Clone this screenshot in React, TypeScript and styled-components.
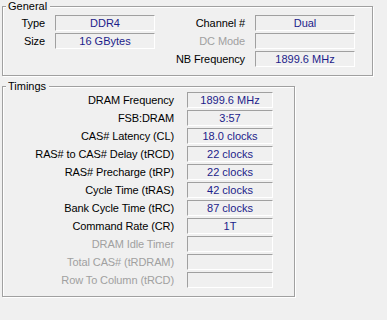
import { Fragment } from 'react';
import styled, { createGlobalStyle } from 'styled-components';

const GlobalStyle = createGlobalStyle`
  html, body {
    margin: 0;
    padding: 0;
    background: #f0f0f0;
  }
  body {
    font-family: 'Liberation Sans', Arial, sans-serif;
    font-size: 11px;
    color: #000;
  }
`;

const Page = styled.div`
  width: 387px;
  height: 320px;
  box-sizing: border-box;
  padding: 6px 0 0 2px;
  display: flex;
  flex-direction: column;
  align-items: flex-start;
  gap: 10px;
`;

interface IGroup {
  width: number;
}

const Group = styled.div<IGroup>`
  position: relative;
  box-sizing: border-box;
  width: ${(props) => props.width}px;
  border: 1px solid #a0a0a0;
  box-shadow: 1px 1px 0 #fff, inset 1px 1px 0 #fff;
`;

const Legend = styled.span`
  position: absolute;
  top: -7px;
  left: 3px;
  padding: 0 3px 0 2px;
  line-height: 13px;
  background: #f0f0f0;
`;

const GeneralGrid = styled.div`
  display: grid;
  grid-template-columns: 52px 100px 100px 100px;
  grid-auto-rows: 16px;
  row-gap: 2px;
  padding: 8px 0 8px 0;
`;

const TimingsGrid = styled.div`
  display: grid;
  grid-template-columns: 184px 86px;
  grid-auto-rows: 16px;
  row-gap: 2px;
  padding: 5px 0 8px 0;
`;

interface ILabel {
  gap: number;
  disabled?: boolean;
}

const Label = styled.div<ILabel>`
  text-align: right;
  white-space: nowrap;
  line-height: 16px;
  letter-spacing: -0.1px;
  padding-right: ${(props) => props.gap}px;
  color: ${(props) => (props.disabled ? '#a0a0a0' : '#000')};
`;

const Field = styled.div`
  box-sizing: border-box;
  height: 16px;
  border-top: 1px solid #a0a0a0;
  border-left: 1px solid #a0a0a0;
  border-bottom: 1px solid #fff;
  border-right: 1px solid #fff;
  text-align: center;
  line-height: 14px;
  color: #1c1c8a;
  white-space: nowrap;
`;

const Spacer = styled.div``;

const timings: [string, string, boolean?][] = [
  ['DRAM Frequency', '1899.6 MHz'],
  ['FSB:DRAM', '3:57'],
  ['CAS# Latency (CL)', '18.0 clocks'],
  ['RAS# to CAS# Delay (tRCD)', '22 clocks'],
  ['RAS# Precharge (tRP)', '22 clocks'],
  ['Cycle Time (tRAS)', '42 clocks'],
  ['Bank Cycle Time (tRC)', '87 clocks'],
  ['Command Rate (CR)', '1T'],
  ['DRAM Idle Timer', '', true],
  ['Total CAS# (tRDRAM)', '', true],
  ['Row To Column (tRCD)', '', true],
];

function App() {
  return (
    <>
      <GlobalStyle />
      <Page>
        <Group width={371}>
          <Legend>General</Legend>
          <GeneralGrid>
            <Label gap={10}>Type</Label>
            <Field>DDR4</Field>
            <Label gap={10}>Channel #</Label>
            <Field>Dual</Field>
            <Label gap={10}>Size</Label>
            <Field>16 GBytes</Field>
            <Label gap={10} disabled>
              DC Mode
            </Label>
            <Field />
            <Spacer />
            <Spacer />
            <Label gap={10}>NB Frequency</Label>
            <Field>1899.6 MHz</Field>
          </GeneralGrid>
        </Group>
        <Group width={293}>
          <Legend>Timings</Legend>
          <TimingsGrid>
            {timings.map(([name, value, disabled]) => (
              <Fragment key={name}>
                <Label gap={13} disabled={disabled}>
                  {name}
                </Label>
                <Field>{value}</Field>
              </Fragment>
            ))}
          </TimingsGrid>
        </Group>
      </Page>
    </>
  );
}

export default App;
